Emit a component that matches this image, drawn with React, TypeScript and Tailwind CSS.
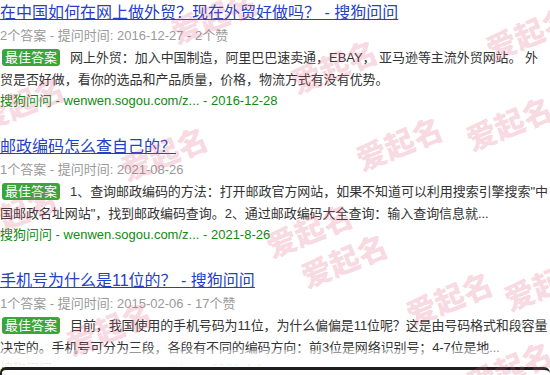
const font = { fontFamily: '"Liberation Sans", "Noto Sans CJK SC", sans-serif' }

interface Item {
  title: string
  meta: string
  answer: string
  date: string
  tight?: boolean
}

const items: Item[] = [
  {
    title: '在中国如何在网上做外贸？现在外贸好做吗？ - 搜狗问问',
    meta: '2个答案 - 提问时间: 2016-12-27 - 2个赞',
    answer:
      '网上外贸：加入中国制造，阿里巴巴速卖通，EBAY， 亚马逊等主流外贸网站。 外贸是否好做，看你的选品和产品质量，价格，物流方式有没有优势。',
    date: '2016-12-28',
  },
  {
    title: '邮政编码怎么查自己的？',
    meta: '1个答案 - 提问时间: 2021-08-26',
    answer:
      '1、查询邮政编码的方法：打开邮政官方网站，如果不知道可以利用搜索引擎搜索"中国邮政名址网站"，找到邮政编码查询。2、通过邮政编码大全查询：输入查询信息就...',
    date: '2021-8-26',
  },
  {
    title: '手机号为什么是11位的？ - 搜狗问问',
    meta: '1个答案 - 提问时间: 2015-02-06 - 17个赞',
    answer:
      '目前，我国使用的手机号码为11位，为什么偏偏是11位呢？这是由号码格式和段容量决定的。手机号可分为三段，各段有不同的编码方向：前3位是网络识别号；4-7位是地...',
    date: '2022-4-1',
    tight: true,
  },
]

// watermark centres
const marks: [number, number][] = [
  [215, 18],
  [335, 68],
  [530, 35],
  [510, 125],
  [22, 105],
  [165, 155],
  [400, 145],
  [15, 215],
  [310, 232],
  [450, 300],
  [548, 285],
  [110, 330],
  [345, 262],
  [510, 370],
]

function Result({ item }: { item: Item }) {
  return (
    <div className="flex flex-col pb-[22px]">
      <a className="text-[16px] leading-[27px] text-[#2440c8] underline whitespace-nowrap">
        {item.title}
      </a>
      <div className="mt-[1px] text-[13px] leading-[18px] text-[#9a9a9a]">{item.meta}</div>
      <div
        className={`mt-[2px] break-all text-[13px] leading-[22px] text-[#333] ${
          item.tight ? 'tracking-[-0.12px]' : 'tracking-[-0.05px]'
        }`}
      >
        <span className="mr-[10px] ml-[2px] rounded-[3px] bg-[#3aa53a] px-[3px] py-[1px] tracking-normal text-white">
          最佳答案
        </span>
        {item.answer}
      </div>
      <div className="text-[13px] leading-[20px] text-[#118a11]">
        搜狗问问 - wenwen.sogou.com/z... - {item.date}
      </div>
    </div>
  )
}

export default function App() {
  return (
    <div className="relative h-[375px] w-[550px] overflow-hidden bg-white" style={font}>
      <div className="-mt-[1px] flex flex-col">
        {items.map((item, i) => (
          <Result key={i} item={item} />
        ))}
      </div>
      <div className="pointer-events-none absolute inset-x-0 top-[350px] h-[17px] bg-gradient-to-b from-white/40 to-white" />
      <div className="absolute inset-x-0 top-[367px] h-[20px] rounded-t-[6px] border-t-[3px] border-l-2 border-[#1e1e1e] bg-white" />
      <div className="pointer-events-none absolute inset-0">
        {marks.map(([x, y], i) => (
          <span
            key={i}
            className="absolute whitespace-nowrap text-[30px] font-black leading-none text-[rgba(225,90,130,0.24)]"
            style={{ left: x, top: y, transform: 'translate(-50%, -50%) rotate(-22deg)' }}
          >
            爱起名
          </span>
        ))}
      </div>
    </div>
  )
}
